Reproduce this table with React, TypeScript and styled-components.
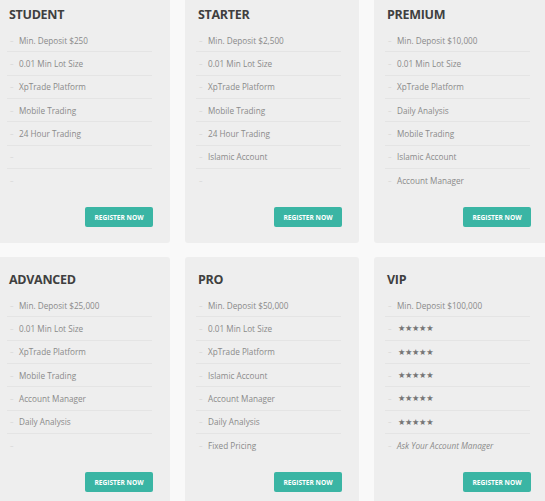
import React from "react";
import styled, { createGlobalStyle } from "styled-components";

const Global = createGlobalStyle`
  html, body { margin: 0; padding: 0; overflow: hidden; background: #f9f9f9; }
  body { font-family: "Open Sans", "Liberation Sans", sans-serif; }
`;

const Grid = styled.div`
  display: grid;
  grid-template-columns: repeat(3, 174px);
  column-gap: 15px;
  row-gap: 14px;
  margin: -8px 0 0 -4px;
  width: 552px;
`;

const Card = styled.div`
  background: #eeeeee;
  border-radius: 3px;
  height: 251px;
  box-sizing: border-box;
  padding: 15px 17px 16px 11px;
  display: flex;
  flex-direction: column;
`;

const Title = styled.h3`
  margin: 0 0 7px 2px;
  font-size: 12.5px;
  line-height: 15px;
  font-weight: 700;
  color: #3f3f3f;
  letter-spacing: -0.3px;
`;

const List = styled.ul`
  list-style: none;
  margin: 0;
  padding: 0;
  margin-right: 1px;
`;

const Item = styled.li<{ $italic?: boolean; $stars?: boolean }>`
  height: 22.33px;
  display: flex;
  align-items: center;
  padding-left: 3px;
  font-size: 8.2px;
  color: ${(p) => (p.$stars ? "#777777" : "#8a8a8a")};
  font-style: ${(p) => (p.$italic ? "italic" : "normal")};
  border-bottom: 1px solid #e4e4e4;
  &:last-child { border-bottom: none; }
  &::before {
    content: "–";
    display: inline-block;
    width: 9px;
    color: #d4d4d4;
    font-style: normal;
    font-size: 7px;
  }
`;

const Stars = styled.span`
  font-family: "DejaVu Sans", sans-serif;
  font-size: 8.2px;
  letter-spacing: -0.3px;
  margin-left: 1px;
`;

const Footer = styled.div`
  margin-top: auto;
  display: flex;
  justify-content: flex-end;
`;

const Button = styled.button`
  width: 68px;
  height: 20px;
  background: #3ab5a4;
  border: none;
  border-radius: 2px;
  color: #ffffff;
  font-family: "Open Sans", "Liberation Sans", sans-serif;
  font-weight: 700;
  font-size: 6.6px;
  text-transform: uppercase;
  padding: 0;
  cursor: pointer;
`;

type Feature = string | { stars: true } | { italic: string };

const plans: { name: string; features: Feature[] }[] = [
  {
    name: "STUDENT",
    features: ["Min. Deposit $250", "0.01 Min Lot Size", "XpTrade Platform", "Mobile Trading", "24 Hour Trading", "", ""],
  },
  {
    name: "STARTER",
    features: ["Min. Deposit $2,500", "0.01 Min Lot Size", "XpTrade Platform", "Mobile Trading", "24 Hour Trading", "Islamic Account", ""],
  },
  {
    name: "PREMIUM",
    features: ["Min. Deposit $10,000", "0.01 Min Lot Size", "XpTrade Platform", "Daily Analysis", "Mobile Trading", "Islamic Account", "Account Manager"],
  },
  {
    name: "ADVANCED",
    features: ["Min. Deposit $25,000", "0.01 Min Lot Size", "XpTrade Platform", "Mobile Trading", "Account Manager", "Daily Analysis", ""],
  },
  {
    name: "PRO",
    features: ["Min. Deposit $50,000", "0.01 Min Lot Size", "XpTrade Platform", "Islamic Account", "Account Manager", "Daily Analysis", "Fixed Pricing"],
  },
  {
    name: "VIP",
    features: [
      "Min. Deposit $100,000",
      { stars: true },
      { stars: true },
      { stars: true },
      { stars: true },
      { stars: true },
      { italic: "Ask Your Account Manager" },
    ],
  },
];

export default function App() {
  return (
    <>
      <Global />
      <Grid>
        {plans.map((p) => (
          <Card key={p.name}>
            <Title>{p.name}</Title>
            <List>
              {p.features.map((f, i) => {
                if (typeof f === "string") return <Item key={i}>{f}</Item>;
                if ("stars" in f)
                  return (
                    <Item key={i} $stars>
                      <Stars>★★★★★</Stars>
                    </Item>
                  );
                return (
                  <Item key={i} $italic>
                    {f.italic}
                  </Item>
                );
              })}
            </List>
            <Footer>
              <Button>Register Now</Button>
            </Footer>
          </Card>
        ))}
      </Grid>
    </>
  );
}
